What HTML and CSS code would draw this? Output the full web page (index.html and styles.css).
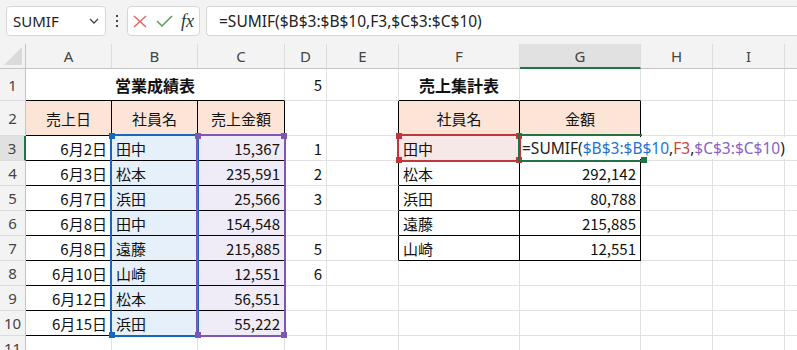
FILE: index.html
```html
<!DOCTYPE html>
<html lang="ja">
<head>
  <meta charset="UTF-8">
  <title>SUMIF</title>
  <link rel="stylesheet" href="styles.css">
</head>
<body>

<div class="toolbar">
  <div class="namebox">
    <span>SUMIF</span>
    <svg width="10" height="6" viewBox="0 0 10 6"><path d="M1 1 L5 5 L9 1" fill="none" stroke="#444" stroke-width="1.3"/></svg>
  </div>
  <div class="dots"><i></i><i></i><i></i></div>
  <div class="fx-buttons">
    <svg width="14" height="13" viewBox="0 0 14 13"><path d="M1 1 L13 12 M13 1 L1 12" stroke="#e06666" stroke-width="1.4" fill="none"/></svg>
    <svg width="17" height="12" viewBox="0 0 17 12"><path d="M1 6 L6 11 L16 1" stroke="#5a9e5a" stroke-width="1.5" fill="none"/></svg>
    <span class="fx">fx</span>
  </div>
  <div class="formula">=SUMIF($B$3:$B$10,F3,$C$3:$C$10)</div>
</div>

<div class="sheet">
  <div class="cells">
    <!-- column headers -->
    <div class="corner"><svg width="18" height="18" viewBox="0 0 18 18"><path d="M18 0 L18 18 L0 18 Z" fill="#dadada"/></svg></div>
    <div class="hd">A</div><div class="hd">B</div><div class="hd">C</div><div class="hd">D</div><div class="hd">E</div>
    <div class="hd">F</div><div class="hd on">G</div><div class="hd">H</div><div class="hd">I</div><div class="hd end"></div>

    <!-- 1 -->
    <div class="rh">1</div>
    <div class="c ctr bold bb span3">営業成績表</div>
    <div class="c r">5</div><div class="c"></div>
    <div class="c ctr bold bb">売上集計表</div><div class="c bb"></div>
    <div class="c"></div><div class="c"></div><div class="c end"></div>

    <!-- 2 -->
    <div class="rh">2</div>
    <div class="c ctr bt pe">売上日</div><div class="c ctr bt pe">社員名</div><div class="c ctr bt pe">売上金額</div>
    <div class="c"></div><div class="c br"></div>
    <div class="c ctr bt pe">社員名</div><div class="c ctr bt pe">金額</div>
    <div class="c"></div><div class="c"></div><div class="c end"></div>

    <!-- 3 -->
    <div class="rh on">3</div>
    <div class="c r bt">6月2日</div><div class="c bt bl">田中</div><div class="c r bt pu">15,367</div>
    <div class="c r">1</div><div class="c br"></div>
    <div class="c bt rd">田中</div>
    <div class="c bt edit"><span class="edit-text">=SUMIF(<b class="f-blue">$B$3:$B$10</b>,<b class="f-red">F3</b>,<b class="f-purple">$C$3:$C$10</b>)</span></div>
    <div class="c"></div><div class="c"></div><div class="c end"></div>

    <!-- 4 -->
    <div class="rh">4</div>
    <div class="c r bt">6月3日</div><div class="c bt bl">松本</div><div class="c r bt pu">235,591</div>
    <div class="c r">2</div><div class="c br"></div>
    <div class="c bt">松本</div><div class="c r bt">292,142</div>
    <div class="c"></div><div class="c"></div><div class="c end"></div>

    <!-- 5 -->
    <div class="rh">5</div>
    <div class="c r bt">6月7日</div><div class="c bt bl">浜田</div><div class="c r bt pu">25,566</div>
    <div class="c r">3</div><div class="c br"></div>
    <div class="c bt">浜田</div><div class="c r bt">80,788</div>
    <div class="c"></div><div class="c"></div><div class="c end"></div>

    <!-- 6 -->
    <div class="rh">6</div>
    <div class="c r bt">6月8日</div><div class="c bt bl">田中</div><div class="c r bt pu">154,548</div>
    <div class="c r"></div><div class="c br"></div>
    <div class="c bt">遠藤</div><div class="c r bt">215,885</div>
    <div class="c"></div><div class="c"></div><div class="c end"></div>

    <!-- 7 -->
    <div class="rh">7</div>
    <div class="c r bt">6月8日</div><div class="c bt bl">遠藤</div><div class="c r bt pu">215,885</div>
    <div class="c r">5</div><div class="c br"></div>
    <div class="c bt">山崎</div><div class="c r bt">12,551</div>
    <div class="c"></div><div class="c"></div><div class="c end"></div>

    <!-- 8 -->
    <div class="rh">8</div>
    <div class="c r bt">6月10日</div><div class="c bt bl">山崎</div><div class="c r bt pu">12,551</div>
    <div class="c r">6</div><div class="c"></div>
    <div class="c"></div><div class="c"></div>
    <div class="c"></div><div class="c"></div><div class="c end"></div>

    <!-- 9 -->
    <div class="rh">9</div>
    <div class="c r bt">6月12日</div><div class="c bt bl">松本</div><div class="c r bt pu">56,551</div>
    <div class="c r"></div><div class="c"></div>
    <div class="c"></div><div class="c"></div>
    <div class="c"></div><div class="c"></div><div class="c end"></div>

    <!-- 10 -->
    <div class="rh">10</div>
    <div class="c r bt">6月15日</div><div class="c bt bl">浜田</div><div class="c r bt pu">55,222</div>
    <div class="c r"></div><div class="c"></div>
    <div class="c"></div><div class="c"></div>
    <div class="c"></div><div class="c"></div><div class="c end"></div>

    <!-- 11 -->
    <div class="rh">11</div>
    <div class="c"></div><div class="c"></div><div class="c"></div>
    <div class="c"></div><div class="c"></div>
    <div class="c"></div><div class="c"></div>
    <div class="c"></div><div class="c"></div><div class="c end"></div>
  </div>

  <!-- reference highlight boxes drawn on top of the cells -->
  <div class="marks">
    <div class="mark m-blue"><i class="h tl"></i><i class="h bl-h"></i></div>
    <div class="mark m-purple"><i class="h tl"></i><i class="h tr"></i><i class="h bl-h"></i><i class="h br-h"></i></div>
    <div class="mark m-red"><i class="h tl"></i><i class="h tr"></i><i class="h bl-h"></i><i class="h br-h"></i></div>
    <div class="mark m-green"><i class="h br-h"></i></div>
  </div>
</div>

</body>
</html>
```

FILE: styles.css
```css
body {
  margin: 0;
  padding: 0;
  background-color: #fff;
  font-family: "Noto Sans", "Liberation Sans", sans-serif;
  overflow: hidden;
}

/* formula bar */
.toolbar {
  height: 44px;
  box-sizing: border-box;
  padding: 6px 0 8px 6px;
  display: flex;
  align-items: stretch;
  background-color: #f3f3f3;
}

.namebox {
  width: 100px;
  box-sizing: border-box;
  display: flex;
  align-items: center;
  justify-content: space-between;
  padding: 0 6px 0 6px;
  background-color: #fff;
  border: 1px solid #d6d6d6;
  border-radius: 4px;
  font-size: 15px;
  color: #222;
}

.dots {
  width: 21px;
  display: flex;
  flex-direction: column;
  align-items: center;
  justify-content: center;
  gap: 3px;
}

.dots i {
  display: block;
  width: 2px;
  height: 2px;
  background-color: #444;
}

.fx-buttons {
  width: 73px;
  box-sizing: border-box;
  display: flex;
  align-items: center;
  gap: 9px;
  padding-left: 5px;
  background-color: #fff;
  border: 1px solid #d6d6d6;
  border-radius: 4px;
}

.fx {
  font-family: "Liberation Serif", serif;
  font-style: italic;
  font-size: 18px;
  color: #333;
  margin-left: -1px;
}

.formula {
  flex: 1;
  margin-left: 6px;
  padding-left: 12px;
  display: flex;
  align-items: center;
  background-color: #fff;
  border: 1px solid #d6d6d6;
  border-right: none;
  border-radius: 4px 0 0 4px;
  font-size: 15.5px;
  color: #222;
}

/* sheet */
.sheet {
  display: grid;
}

.cells,
.marks {
  grid-area: 1 / 1;
  display: grid;
  grid-template-columns: 26px 86px 86px 87px 42px 72px 121px 121px 72px 72px 1fr;
  grid-template-rows: 25px 32px 35px repeat(8, 25px) 25px;
}

.marks {
  pointer-events: none;
}

.corner,
.hd,
.rh {
  background-color: #f3f3f3;
  box-sizing: border-box;
  color: #444;
  font-size: 15px;
  display: flex;
  align-items: center;
  justify-content: center;
}

.corner {
  border-right: 1px solid #c4c4c4;
  border-bottom: 1px solid #c4c4c4;
  align-items: flex-end;
  justify-content: flex-end;
  padding: 0 3px 3px 0;
}

.hd {
  border-right: 1px solid #dcdcdc;
  border-bottom: 1px solid #c4c4c4;
}

.hd.on {
  background-color: #e1e1e1;
  border-bottom: 2px solid #217346;
}

.rh {
  border-right: 1px solid #c4c4c4;
  border-bottom: 1px solid #dcdcdc;
}

.rh.on {
  background-color: #e1e1e1;
  border-right: 2px solid #217346;
}

.end {
  border-right: none;
}

.c {
  box-sizing: border-box;
  display: flex;
  align-items: center;
  padding: 0 4px 0 4px;
  border-right: 1px solid #e1e1e1;
  border-bottom: 1px solid #e1e1e1;
  font-family: "Noto Sans CJK JP", "Noto Sans", sans-serif;
  font-size: 15px;
  line-height: 1;
  color: #111;
  white-space: nowrap;
}

.c.end {
  border-right: none;
}

.r {
  justify-content: flex-end;
}

.ctr {
  justify-content: center;
}

.bold {
  font-weight: bold;
  font-size: 16px;
}

.span3 {
  grid-column: span 3;
}

.bt {
  border-right-color: #000;
  border-bottom-color: #000;
}

.bb {
  border-bottom-color: #000;
}

.br {
  border-right-color: #000;
}

.pe {
  background-color: #fce4d6;
}

.bl {
  background-color: #e5f0fa;
}

.pu {
  background-color: #efebf7;
}

.rd {
  background-color: #f7e8e8;
}

/* cell in edit mode */
.edit {
  overflow: visible;
  padding-left: 2px;
}

.edit-text {
  position: relative;
  z-index: 1;
  background-color: #fff;
  font-family: "Noto Sans", "Liberation Sans", sans-serif;
  font-size: 15.5px;
  line-height: 22px;
  padding-right: 4px;
  color: #222;
}

.edit-text b {
  font-weight: normal;
}

.f-blue {
  color: #1f74d0;
}

.f-red {
  color: #c9453a;
}

.f-purple {
  color: #8b62c2;
}

/* highlight boxes */
.mark {
  position: relative;
  box-sizing: border-box;
  border: 2px solid;
  margin: -2px -1px -1px -2px;
}

.m-blue {
  grid-column: 3;
  grid-row: 4 / 12;
  border-color: #1368bf;
}

.m-purple {
  grid-column: 4;
  grid-row: 4 / 12;
  border-color: #7e57b5;
}

.m-red {
  grid-column: 7;
  grid-row: 4;
  border-color: #c0363b;
}

.m-green {
  grid-column: 8;
  grid-row: 4;
  border-color: #217346;
  border-right: none;
  z-index: 2;
}

.h {
  position: absolute;
  width: 6px;
  height: 6px;
  background-color: inherit;
}

.m-blue .h { background-color: #1368bf; }
.m-purple .h { background-color: #7e57b5; }
.m-red .h { background-color: #c0363b; }
.m-green .h { background-color: #217346; }

.tl { top: -3px; left: -3px; }
.tr { top: -3px; right: -3px; }
.bl-h { bottom: -3px; left: -3px; }
.br-h { bottom: -3px; right: -3px; }

.m-green .br-h { right: -5px; }
```
